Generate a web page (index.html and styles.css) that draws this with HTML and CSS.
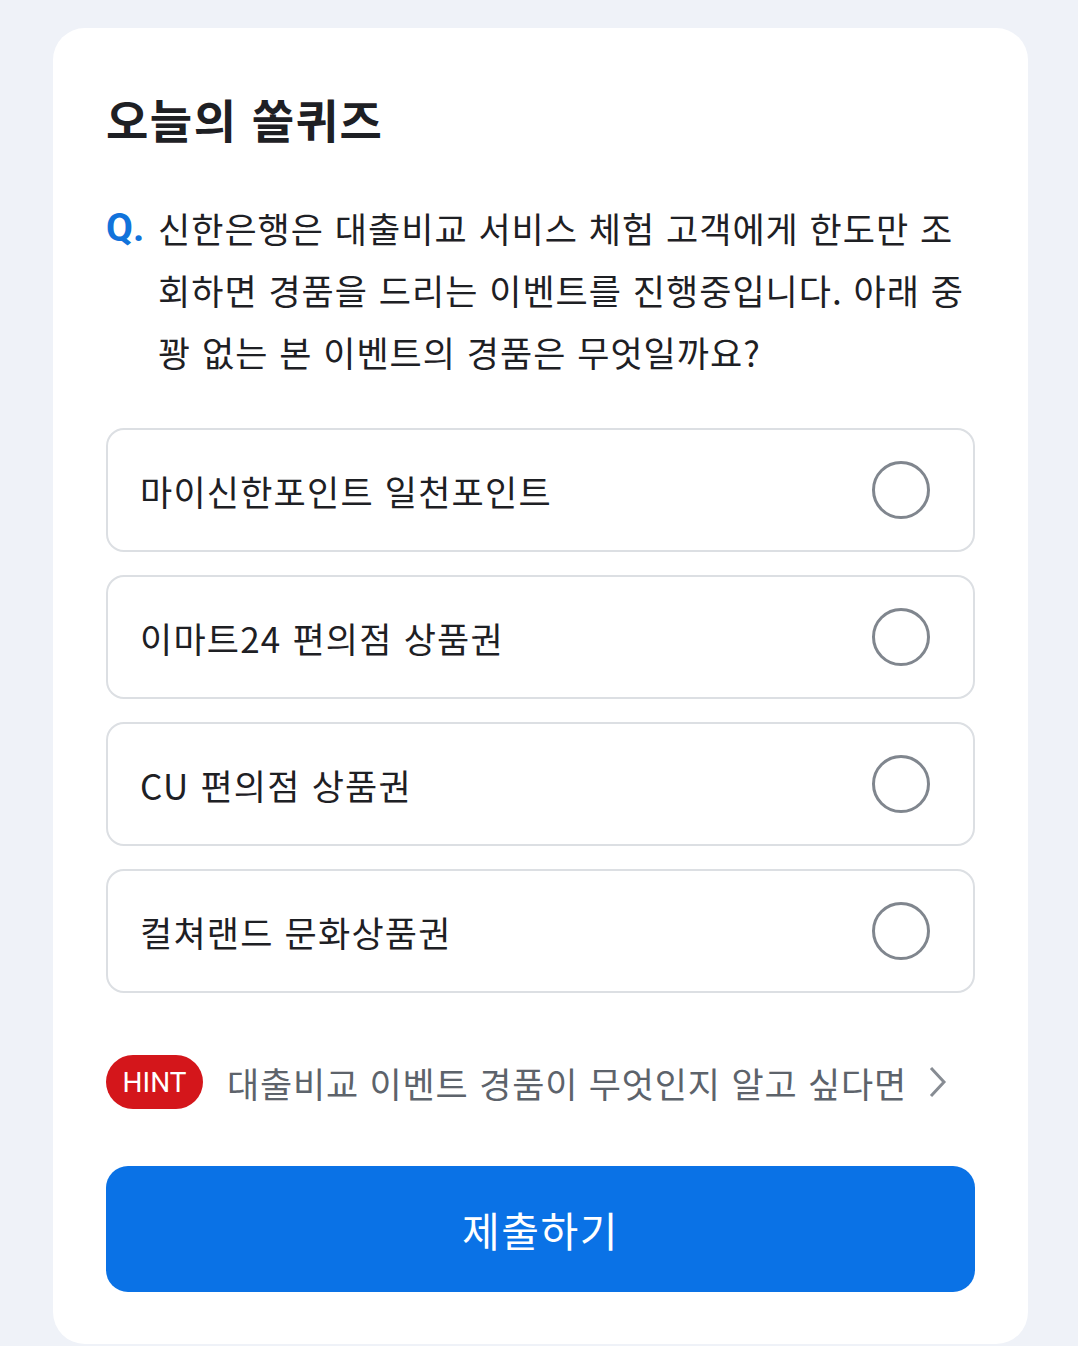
FILE: index.html
```html
<!DOCTYPE html>
<html lang="ko">
<head>
    <meta charset="UTF-8">
    <meta name="viewport" content="width=device-width, initial-scale=1.0">
    <title>오늘의 쏠퀴즈</title>
    <link rel="stylesheet" href="styles.css">
</head>
<body>
    <main class="quiz-card">
        <h1 class="quiz-title">오늘의 쏠퀴즈</h1>

        <div class="question">
            <span class="q-mark">Q.</span>
            <p class="q-text">신한은행은 대출비교 서비스 체험 고객에게 한도만 조회하면 경품을 드리는 이벤트를 진행중입니다. 아래 중 꽝 없는 본 이벤트의 경품은 무엇일까요?</p>
        </div>

        <!-- Answer options -->
        <ul class="options">
            <li class="option">
                <span class="option-label">마이신한포인트 일천포인트</span>
                <svg class="radio" width="60" height="60" viewBox="0 0 60 60"><circle cx="30" cy="30" r="27.5" fill="none" stroke="#80868e" stroke-width="3"/></svg>
            </li>
            <li class="option">
                <span class="option-label">이마트24 편의점 상품권</span>
                <svg class="radio" width="60" height="60" viewBox="0 0 60 60"><circle cx="30" cy="30" r="27.5" fill="none" stroke="#80868e" stroke-width="3"/></svg>
            </li>
            <li class="option">
                <span class="option-label">CU 편의점 상품권</span>
                <svg class="radio" width="60" height="60" viewBox="0 0 60 60"><circle cx="30" cy="30" r="27.5" fill="none" stroke="#80868e" stroke-width="3"/></svg>
            </li>
            <li class="option">
                <span class="option-label">컬쳐랜드 문화상품권</span>
                <svg class="radio" width="60" height="60" viewBox="0 0 60 60"><circle cx="30" cy="30" r="27.5" fill="none" stroke="#80868e" stroke-width="3"/></svg>
            </li>
        </ul>

        <a href="#" class="hint">
            <span class="hint-badge">HINT</span>
            <span class="hint-text">대출비교 이벤트 경품이 무엇인지 알고 싶다면</span>
            <svg class="hint-arrow" width="22" height="34" viewBox="0 0 22 34"><path d="M4 3 L17 17 L4 31" fill="none" stroke="#878c93" stroke-width="3"/></svg>
        </a>

        <button class="submit-btn">제출하기</button>
    </main>
</body>
</html>
```

FILE: styles.css
```css
* {
    margin: 0;
    padding: 0;
    box-sizing: border-box;
}
body {
    font-family: "Noto Sans CJK KR", "Noto Sans", sans-serif;
    background-color: #eff2f8;
    color: #1e2024;
    padding-top: 28px;
}
.quiz-card {
    background-color: #fff;
    margin: 0 50px 0 53px;
    border-radius: 32px;
    padding: 60px 53px 52px 53px;
}
.quiz-title {
    font-size: 46px;
    font-weight: 700;
    line-height: 60px;
    letter-spacing: 1.5px;
}
.question {
    display: flex;
    margin-top: 49px;
}
.q-mark {
    flex: 0 0 52px;
    color: #1173db;
    font-family: Roboto, "Noto Sans", sans-serif;
    font-weight: 700;
    font-size: 39px;
    line-height: 62px;
}
.q-text {
    font-size: 35px;
    line-height: 62px;
    letter-spacing: 1px;
    word-break: break-all;
}
.options {
    list-style: none;
    margin-top: 45px;
    display: flex;
    flex-direction: column;
    gap: 23px;
}
.option {
    height: 124px;
    border: 2px solid #dcdfe3;
    border-radius: 18px;
    display: flex;
    align-items: center;
    justify-content: space-between;
    padding: 0 42px 0 32px;
    cursor: pointer;
}
.option-label {
    font-size: 35px;
    letter-spacing: 1.2px;
}
.hint {
    display: flex;
    align-items: center;
    margin-top: 62px;
    text-decoration: none;
}
.hint-badge {
    background-color: #d4161b;
    color: #fff;
    font-family: Roboto, "Liberation Sans", sans-serif;
    font-size: 28px;
    height: 54px;
    width: 97px;
    border-radius: 27px;
    display: flex;
    align-items: center;
    justify-content: center;
}
.hint-text {
    color: #5d636b;
    font-size: 35px;
    letter-spacing: 0.8px;
    margin-left: 24px;
}
.hint-arrow {
    margin-left: 20px;
}
.submit-btn {
    display: block;
    width: 100%;
    height: 126px;
    margin-top: 57px;
    border: none;
    border-radius: 22px;
    background-color: #0a72e6;
    color: #fff;
    font-family: "Noto Sans CJK KR", sans-serif;
    font-size: 41px;
    letter-spacing: 1.5px;
    cursor: pointer;
}
```
